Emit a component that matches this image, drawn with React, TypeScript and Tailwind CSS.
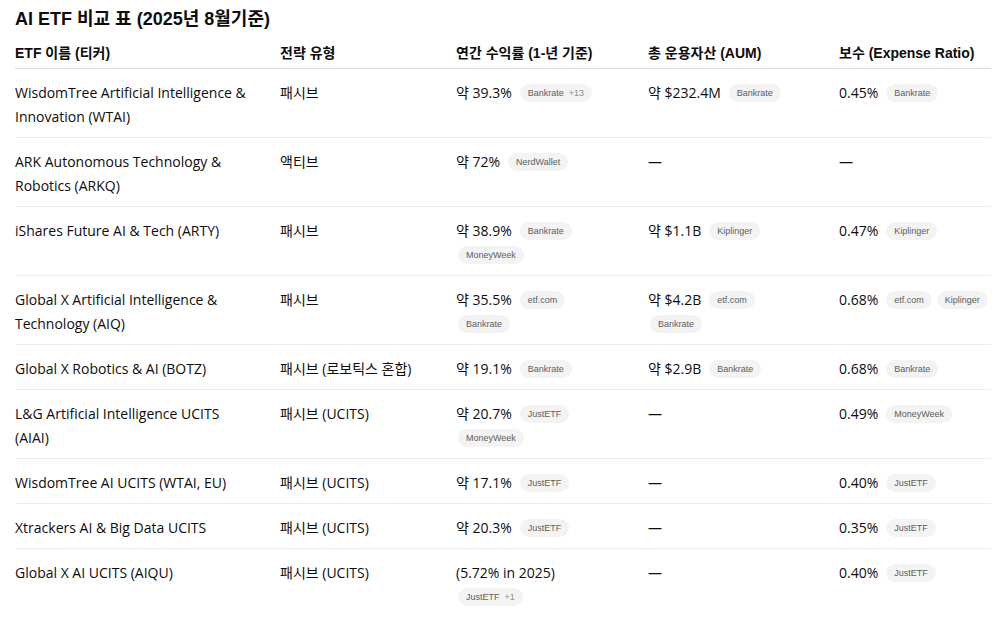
import React from "react";

type Row = {
  name: string;
  strategy: string;
  ret: string;
  retSrc: string[];
  retMore?: string;
  aum?: string;
  aumSrc?: string[];
  fee?: string;
  feeSrc?: string[];
};

const rows: Row[] = [
  { name: "WisdomTree Artificial Intelligence & Innovation (WTAI)", strategy: "패시브", ret: "약 39.3%", retSrc: ["Bankrate"], retMore: "+13", aum: "약 $232.4M", aumSrc: ["Bankrate"], fee: "0.45%", feeSrc: ["Bankrate"] },
  { name: "ARK Autonomous Technology & Robotics (ARKQ)", strategy: "액티브", ret: "약 72%", retSrc: ["NerdWallet"] },
  { name: "iShares Future AI & Tech (ARTY)", strategy: "패시브", ret: "약 38.9%", retSrc: ["Bankrate", "MoneyWeek"], aum: "약 $1.1B", aumSrc: ["Kiplinger"], fee: "0.47%", feeSrc: ["Kiplinger"] },
  { name: "Global X Artificial Intelligence & Technology (AIQ)", strategy: "패시브", ret: "약 35.5%", retSrc: ["etf.com", "Bankrate"], aum: "약 $4.2B", aumSrc: ["etf.com", "Bankrate"], fee: "0.68%", feeSrc: ["etf.com", "Kiplinger"] },
  { name: "Global X Robotics & AI (BOTZ)", strategy: "패시브 (로보틱스 혼합)", ret: "약 19.1%", retSrc: ["Bankrate"], aum: "약 $2.9B", aumSrc: ["Bankrate"], fee: "0.68%", feeSrc: ["Bankrate"] },
  { name: "L&G Artificial Intelligence UCITS (AIAI)", strategy: "패시브 (UCITS)", ret: "약 20.7%", retSrc: ["JustETF", "MoneyWeek"], fee: "0.49%", feeSrc: ["MoneyWeek"] },
  { name: "WisdomTree AI UCITS (WTAI, EU)", strategy: "패시브 (UCITS)", ret: "약 17.1%", retSrc: ["JustETF"], fee: "0.40%", feeSrc: ["JustETF"] },
  { name: "Xtrackers AI & Big Data UCITS", strategy: "패시브 (UCITS)", ret: "약 20.3%", retSrc: ["JustETF"], fee: "0.35%", feeSrc: ["JustETF"] },
  { name: "Global X AI UCITS (AIQU)", strategy: "패시브 (UCITS)", ret: "(5.72% in 2025)", retSrc: ["JustETF"], retMore: "+1", fee: "0.40%", feeSrc: ["JustETF"] },
];

const Pill = ({ label, more }: { label: string; more?: string }) => (
  <span
    className="ml-[2px] mr-[3px] my-[3px] inline-flex h-[18px] items-center gap-[5px] rounded-full bg-[#f3f3f3] px-[8px] text-[9px] leading-none text-[#5d5d5d] whitespace-nowrap"
    style={{ fontFamily: '"Liberation Sans", sans-serif' }}
  >
    {label}
    {more && <span className="text-[#8f8f8f]">{more}</span>}
  </span>
);

const ValueCell = ({ value, sources, more }: { value?: string; sources?: string[]; more?: string }) => {
  if (!value) return <span className="leading-6">—</span>;
  return (
    <div className="flex flex-wrap items-center">
      <span className="mr-[6px] leading-6 whitespace-nowrap">{value}</span>
      {sources?.map((s, i) => (
        <Pill key={s} label={s} more={i === sources.length - 1 ? more : undefined} />
      ))}
    </div>
  );
};

const head = "pb-[3px] pr-[28px] align-top font-bold leading-6 whitespace-nowrap";
const cell = "pt-3 pb-[8px] pr-[28px] align-top leading-6";

export default function App() {
  return (
    <div
      className="min-h-screen bg-white px-[15px] pt-[5px] text-[#0d0d0d]"
      style={{ fontFamily: '"Liberation Sans", "Noto Sans CJK KR", sans-serif' }}
    >
      <h1 className="text-[18px] font-bold leading-7">AI ETF 비교 표 (2025년 8월기준)</h1>
      <table className="mt-[8px] w-[976px] table-fixed border-collapse text-left text-[14px]">
        <colgroup>
          <col className="w-[265px]" />
          <col className="w-[176px]" />
          <col className="w-[192px]" />
          <col className="w-[191px]" />
          <col className="w-[152px]" />
        </colgroup>
        <thead>
          <tr className="border-b border-[#dcdcdc]">
            <th className={head}>ETF 이름 (티커)</th>
            <th className={head}>전략 유형</th>
            <th className={head}>연간 수익률 (1-년 기준)</th>
            <th className={head}>총 운용자산 (AUM)</th>
            <th className="pb-[3px] align-top font-bold leading-6 whitespace-nowrap">보수 (Expense Ratio)</th>
          </tr>
        </thead>
        <tbody style={{ fontFamily: '"Open Sans", "Noto Sans CJK KR", sans-serif' }} className="text-[14px]">
          {rows.map((r, i) => (
            <tr key={r.name} className={i < rows.length - 1 ? "border-b border-[#ededed]" : ""}>
              <td className={cell}>{r.name}</td>
              <td className={cell}>{r.strategy}</td>
              <td className={cell}>
                <ValueCell value={r.ret} sources={r.retSrc} more={r.retMore} />
              </td>
              <td className={cell}>
                <ValueCell value={r.aum} sources={r.aumSrc} />
              </td>
              <td className="pt-3 pb-[8px] align-top leading-6">
                <ValueCell value={r.fee} sources={r.feeSrc} />
              </td>
            </tr>
          ))}
        </tbody>
      </table>
    </div>
  );
}
